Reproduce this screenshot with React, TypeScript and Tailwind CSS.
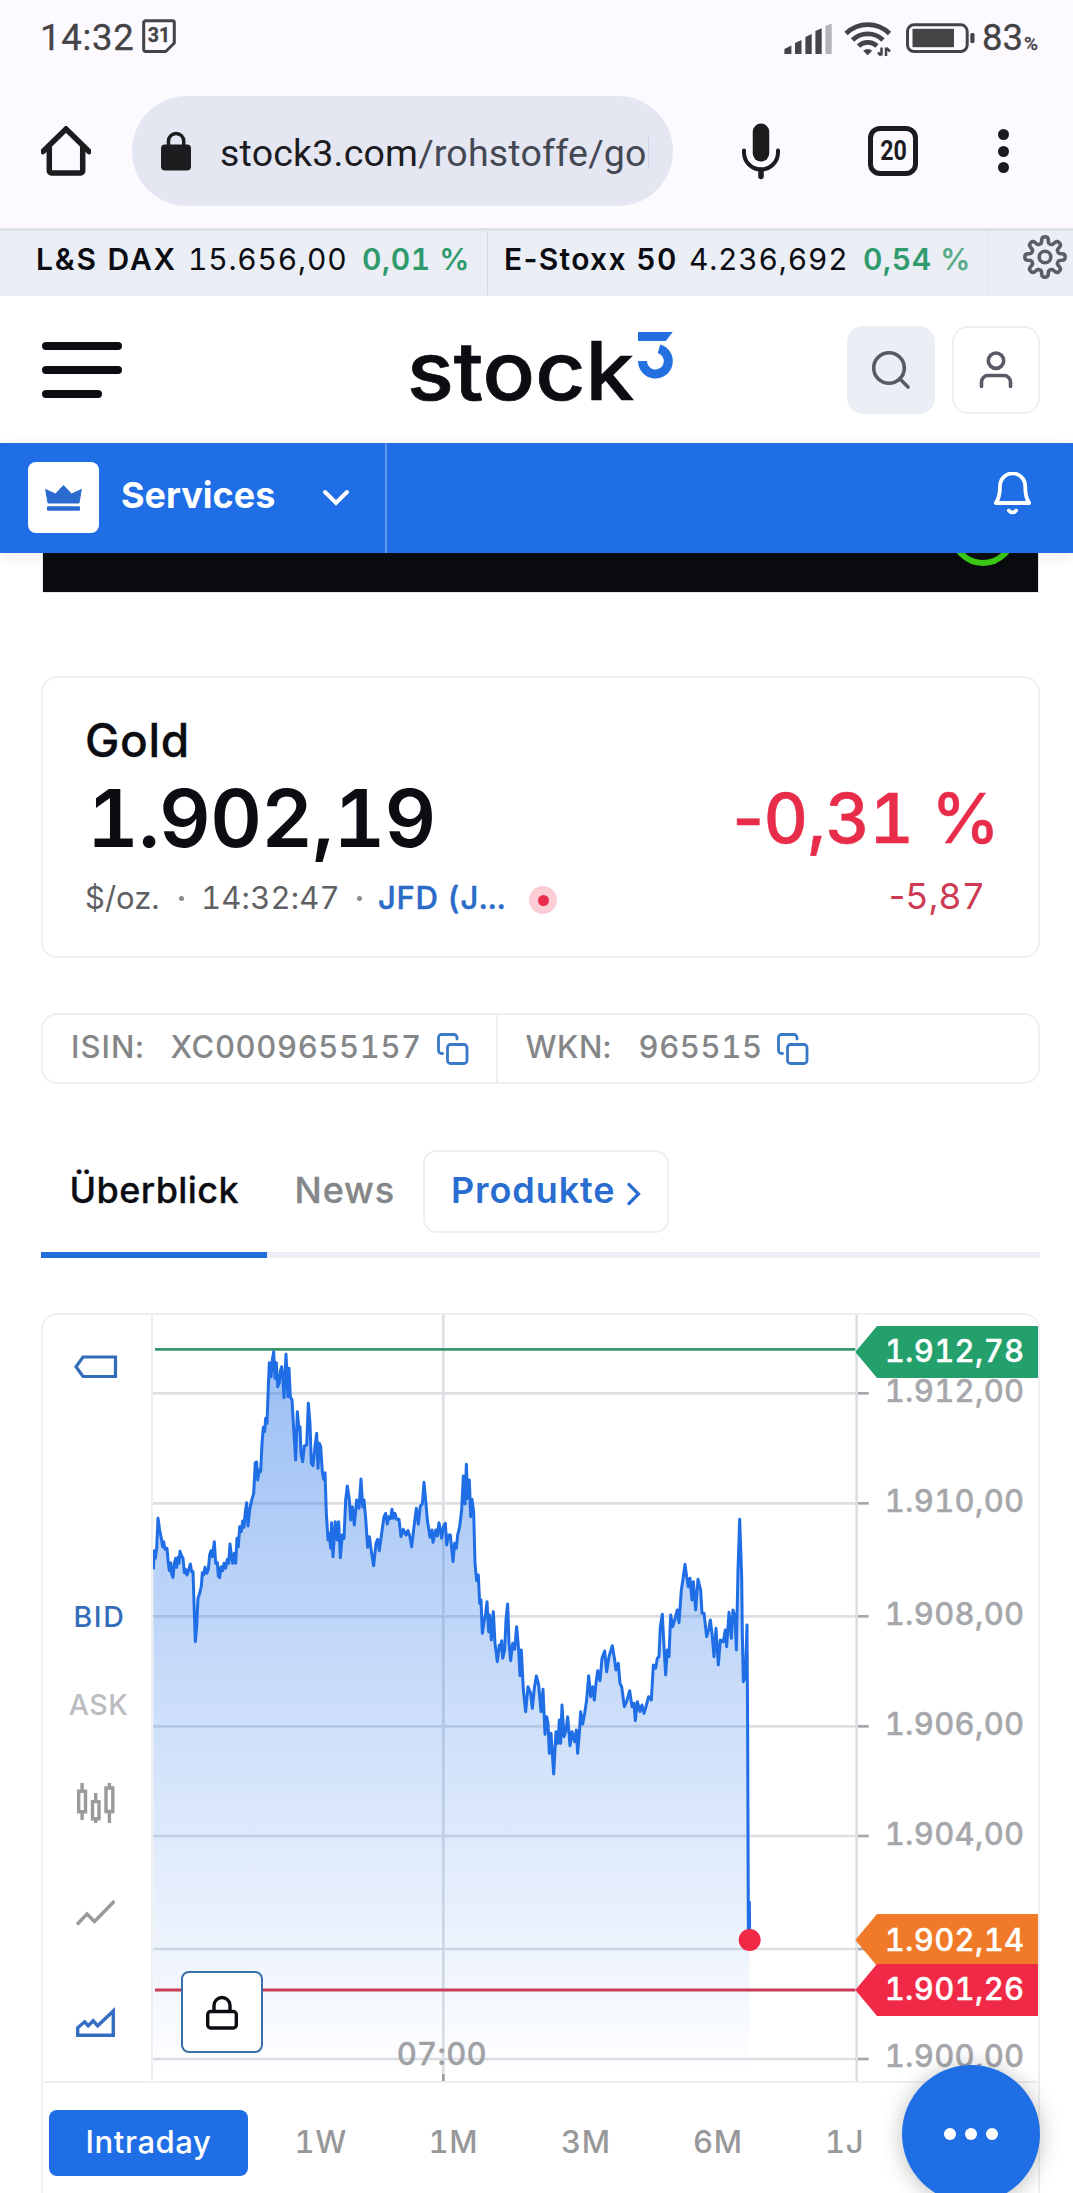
import type { ReactNode } from "react";

/* Chart coordinates are thirds of a pixel inside the price panel's own view box. */
const SERIES_EARLY: number[] = [
  460, 808, 463, 752, 466, 775, 470, 745, 474, 655, 479, 690, 484, 715, 488, 740, 491, 725, 495, 748, 501, 745, 505, 790,
  508, 812, 512, 788, 515, 822, 519, 832, 523, 790, 527, 775, 530, 802, 534, 772, 537, 790, 540, 754, 545, 768, 549, 775,
  553, 818, 557, 808, 561, 825, 566, 810, 571, 792, 575, 815, 579, 815, 583, 940, 586, 1025, 590, 980, 594, 895, 599, 880,
  604, 858, 607, 818, 611, 825, 615, 802, 620, 820, 625, 808, 629, 765, 633, 752, 637, 770, 643, 725, 647, 790, 652, 788,
  655, 828, 659, 833, 663, 800, 668, 812, 672, 790, 677, 805, 682, 778, 686, 790, 690, 732, 694, 765, 698, 790, 703, 760,
  707, 790, 711, 715, 715, 740, 719, 680, 724, 695, 728, 663, 732, 682, 736, 635, 740, 608, 744, 678, 749, 630, 754, 605,
  761, 580, 766, 488, 770, 486, 773, 540, 778, 510, 782, 515, 786, 430, 790, 382, 794, 395, 797, 355, 801, 370, 805, 260,
  808, 188, 813, 230, 817, 180, 821, 155, 825, 235, 829, 188, 833, 260, 838, 248, 841, 215, 845, 200, 849, 240, 852, 293,
  858, 163, 864, 290, 867, 205, 871, 290, 876, 300, 880, 370, 887, 480, 892, 335, 897, 390, 900, 380, 903, 460, 908, 485,
  913, 438, 920, 435, 925, 310, 930, 370, 934, 490, 939, 497, 945, 440, 950, 400, 954, 505, 958, 430, 962, 440, 967, 515,
  971, 538, 975, 518, 979, 640, 984, 720, 988, 700, 992, 745, 995, 668, 999, 770, 1006, 665, 1012, 720, 1016, 665,
  1021, 773, 1027, 705, 1032, 715, 1037, 600, 1042, 558, 1048, 600, 1052, 660, 1057, 620, 1063, 675, 1070, 600,
  1077, 625, 1083, 537, 1088, 620, 1092, 600, 1097, 655, 1103, 742, 1108, 710, 1115, 760, 1121, 797, 1128, 730,
  1133, 718, 1138, 752, 1145, 700, 1152, 650, 1157, 640, 1162, 672, 1167, 650, 1172, 655, 1176, 628, 1180, 655,
  1185, 640, 1190, 658,
];

const SERIES_LATE: number[] = [
  57, 658, 63, 710, 70, 688, 78, 705, 84, 692, 90, 712, 95, 740, 102, 680, 109, 625, 115, 672, 121, 618, 127, 612,
  132, 547, 137, 600, 142, 660, 150, 712, 156, 690, 159, 727, 167, 690, 172, 708, 177, 668, 185, 715, 190, 680,
  196, 670, 200, 735, 205, 705, 211, 705, 219, 785, 224, 730, 229, 745, 233, 705, 239, 680, 245, 630, 250, 528,
  255, 612, 259, 493, 263, 595, 268, 540, 272, 650, 276, 598, 281, 635, 285, 790, 290, 842, 295, 825, 299, 910,
  303, 900, 307, 1000, 313, 960, 317, 940, 321, 905, 326, 995, 329, 945, 334, 1020, 340, 935, 345, 1030, 352, 1085,
  358, 1035, 362, 1050, 365, 1022, 368, 1075, 374, 1050, 378, 960, 383, 912, 387, 1030, 392, 1082, 398, 1030,
  404, 1048, 410, 980, 416, 1050, 420, 1127, 424, 1050, 430, 1170, 437, 1235, 444, 1160, 452, 1180, 457, 1225,
  463, 1165, 469, 1128, 476, 1155, 483, 1235, 489, 1168, 495, 1303, 500, 1250, 504, 1270, 508, 1360, 513, 1300,
  521, 1422, 528, 1295, 534, 1330, 538, 1260, 542, 1330, 546, 1215, 552, 1310, 558, 1290, 563, 1250, 570, 1337,
  576, 1295, 584, 1325, 589, 1290, 593, 1360, 598, 1300, 602, 1235, 608, 1272, 614, 1240, 620, 1200, 626, 1127,
  632, 1190, 638, 1160, 643, 1200, 648, 1150, 653, 1112, 660, 1142, 666, 1075, 674, 1053, 680, 1115, 687, 1070,
  697, 1037, 704, 1080, 708, 1110, 715, 1090, 720, 1150, 725, 1160, 733, 1220, 740, 1205, 749, 1172, 756, 1220,
  762, 1210, 766, 1262, 772, 1205, 780, 1235, 786, 1215, 792, 1240, 798, 1220, 806, 1190, 814, 1200, 820, 1095,
  827, 1105, 832, 1075, 837, 1070, 841, 980, 847, 943, 852, 1040, 857, 1125, 862, 1050, 867, 1070, 872, 945,
  878, 980, 884, 960, 892, 930, 897, 968, 904, 870, 910, 830, 915, 793, 920, 830, 925, 860, 930, 835, 936, 900,
  940, 845, 947, 930, 954, 838, 962, 870, 966, 940, 972, 940, 980, 1010, 987, 985, 991, 960, 996, 1000, 1002, 1070,
  1008, 985, 1015, 1095, 1021, 1020, 1030, 1025, 1036, 990, 1040, 1040, 1047, 937, 1054, 1015, 1059, 930, 1065, 950,
  1069, 1050, 1074, 810, 1079, 658, 1085, 830, 1087, 1000, 1090, 1145, 1096, 1130, 1101, 975, 1103, 1300, 1105, 1890,
  1108, 1806, 1109, 1900,
];

const toPoints = (flat: number[], dx: number) => {
  const out: string[] = [];
  for (let i = 0; i < flat.length; i += 2) out.push(`${flat[i] + dx},${flat[i + 1]}`);
  return out;
};
const LINE = [...toPoints(SERIES_EARLY, 0), ...toPoints(SERIES_LATE, 1140)].join(" ");

const AXIS = [
  { y: 280, label: "1.912,00", baseline: 306 },
  { y: 610, label: "1.910,00", baseline: 636 },
  { y: 949, label: "1.908,00", baseline: 975 },
  { y: 1279, label: "1.906,00", baseline: 1305 },
  { y: 1608, label: "1.904,00", baseline: 1635 },
  { y: 1947, label: "", baseline: 1973 },
  { y: 2277, label: "1.900,00", baseline: 2300 },
];

const TAGS = [
  { y: 156, label: "1.912,78", fill: "#24a06c", baseline: 186 },
  { y: 1920, label: "1.902,14", fill: "#f07a28", baseline: 1952 },
  { y: 2070, label: "1.901,26", fill: "#f02a46", baseline: 2099 },
];

function AxisText({ x, y, fill, children }: { x: number; y: number; fill: string; children: ReactNode }) {
  return (
    <text x={x} y={y} fontSize="93" fontWeight="500" letterSpacing="1" fill={fill} stroke={fill} strokeWidth="1">
      {children}
    </text>
  );
}

function PriceChart() {
  return (
    <svg viewBox="459 45 2655 2298" className="block h-[766px] w-[885px]">
      <defs>
        <linearGradient id="area" gradientUnits="userSpaceOnUse" x1="0" y1="155" x2="0" y2="2330">
          <stop offset="0" stopColor="#1f6ee6" stopOpacity="0.45" />
          <stop offset="1" stopColor="#1f6ee6" stopOpacity="0" />
        </linearGradient>
      </defs>
      {AXIS.map((a) => (
        <g key={a.y}>
          <line x1="459" x2="2570" y1={a.y} y2={a.y} stroke="#dcdfe4" strokeWidth="8" />
          <line x1="2574" x2="2606" y1={a.y} y2={a.y} stroke="#a6a7ab" strokeWidth="8" />
          <AxisText x={2654} y={a.baseline} fill="#a6a7ab">
            {a.label}
          </AxisText>
        </g>
      ))}
      <line x1="1330" x2="1330" y1="45" y2="2343" stroke="#dcdfe4" strokeWidth="8" />
      <line x1="1330" x2="1330" y1="2322" y2="2343" stroke="#9a9b9f" strokeWidth="8" />
      <line x1="2570" x2="2570" y1="45" y2="2343" stroke="#dcdfe4" strokeWidth="8" />
      <polygon points={`460,2343 ${LINE} 2248,2343`} fill="url(#area)" />
      <line x1="465" x2="2566" y1="148" y2="148" stroke="#36966c" strokeWidth="8.5" />
      <line x1="465" x2="2566" y1="2070" y2="2070" stroke="#c93c56" strokeWidth="8.5" />
      <polyline points={LINE} fill="none" stroke="#1f6ee6" strokeWidth="9" strokeLinejoin="round" />
      <circle cx="2249" cy="1920" r="33" fill="#f02a46" />
      <AxisText x={1190} y={2294} fill="#a0a1a5">
        07:00
      </AxisText>
      {TAGS.map((t) => (
        <g key={t.label}>
          <polygon
            points={`2566,${t.y} 2631,${t.y - 78} 3114,${t.y - 78} 3114,${t.y + 78} 2631,${t.y + 78}`}
            fill={t.fill}
          />
          <AxisText x={2654} y={t.baseline} fill="#ffffff">
            {t.label}
          </AxisText>
        </g>
      ))}
    </svg>
  );
}

function CopyIcon() {
  return (
    <svg viewBox="0 0 32 32" className="h-8 w-8" fill="none" stroke="#3a78c8" strokeWidth="2.8" strokeLinecap="round">
      <rect x="10.5" y="11.5" width="19.5" height="19" rx="3" />
      <path d="M5.500 20.500h-1a3 3 0 0 1-3-3V4.500a3 3 0 0 1 3-3h12.500a3 3 0 0 1 3 3v1.500" />
    </svg>
  );
}

function StatusBar() {
  return (
    <div className="flex h-[76px] items-center text-[#444346] font-[Roboto] [-webkit-text-stroke:0.3px]">
      <span className="ml-10 w-[102px] text-[36.5px] leading-none tracking-[0.7px]">14:32</span>
      <div className="relative mt-[-4px] flex h-[34px] w-[34px] items-center justify-center">
        <svg viewBox="0 0 34 34" className="absolute inset-0" fill="none" stroke="#444346" strokeWidth="3">
          <path d="M3.500 1.700h27a1.800 1.800 0 0 1 1.800 1.800V24l-8.500 8.500H3.500a1.800 1.800 0 0 1-1.800-1.800V3.500a1.800 1.800 0 0 1 1.800-1.800z" strokeLinejoin="round" />
        </svg>
        <span className="relative text-[19.500px] font-bold leading-none">31</span>
      </div>
      <svg viewBox="784 18 48 36" className="ml-[608px] h-9 w-12" fill="#444346">
        <path d="M784.4 47l7-3.500V52h-7z" />
        <path d="M795 41l6.500-3V52H795z" />
        <path d="M805.400 35l6.300-3V52h-6.300z" />
        <path d="M815.400 29l6.300-2.700V52h-6.300z" />
        <path d="M825.400 24l6.300-2.500V52h-6.300z" fill="#b5b3b8" />
      </svg>
      <svg viewBox="844 18 48 37" className="ml-3 h-[37px] w-12" fill="none" stroke="#444346" strokeWidth="4.700">
        <path d="M846 31.500a31 31 0 0 1 43.500 0" />
        <path d="M852.500 38a22 22 0 0 1 30.500 0" />
        <path d="M858.500 44a13.500 13.500 0 0 1 18.500 0" />
        <path d="M867.700 53.300l-4.500-4.500a6.500 6.500 0 0 1 9 0z" fill="#444346" stroke="none" />
        <path d="M881.500 45.500v8M878 50.500l3 3M886 54v-8.500M886.500 46l3.500 3.500" strokeWidth="2.500" />
      </svg>
      <svg viewBox="905 20 70 33" className="ml-[13px] h-[33px] w-[70px]" fill="none">
        <rect x="907.500" y="22.800" width="59.700" height="26.700" rx="6.500" stroke="#444346" strokeWidth="3" />
        <rect x="912.500" y="26.800" width="41.500" height="18.400" fill="#444346" />
        <rect x="970.300" y="31" width="4.200" height="10" rx="1.500" fill="#444346" />
      </svg>
      <span className="ml-[7px] text-[36.5px] leading-none">83</span>
      <span className="mt-[10px] ml-px text-[19px] font-medium leading-none">%</span>
    </div>
  );
}

function BrowserToolbar() {
  return (
    <div className="mt-5 flex h-[110px] items-center font-[Roboto]">
      <svg viewBox="41 126 50 50" className="ml-[41px] h-[50px] w-[50px]" fill="none" stroke="#1c1b1e" strokeWidth="5.500" strokeLinecap="round">
        <path d="M43 151.500L66 129l23 22.500" strokeLinejoin="miter" />
        <path d="M49.300 147v24a2 2 0 0 0 2 2h29.400a2 2 0 0 0 2-2v-24" strokeLinecap="butt" />
      </svg>
      <div className="ml-[41px] flex h-[110px] w-[541px] items-center rounded-full bg-[#e4e6f2]">
        <svg viewBox="161 130 30 40" className="ml-[29px] h-10 w-[30px]">
          <rect x="161" y="143.500" width="30" height="26" rx="4" fill="#1c1b1e" />
          <path d="M168.500 145v-5a7.600 7.600 0 0 1 15.200 0v5" fill="none" stroke="#1c1b1e" strokeWidth="3.500" />
        </svg>
        <span className="ml-[29px] mt-[3px] w-[429px] whitespace-nowrap border-r border-[#cfd2e2] text-[37.5px] leading-[32px] tracking-[0.2px] text-[#444852]">
          <span className="text-[#1c1b1e]">stock3.com</span>/rohstoffe/go
        </span>
      </div>
      <svg viewBox="741 123 40 57" className="ml-[68px] h-[57px] w-10" fill="none" stroke="#1c1b1e" strokeLinecap="round">
        <path d="M761 131.800v21.500" strokeWidth="16.500" />
        <path d="M744 150.500v2a17 17 0 0 0 34 0v-2" strokeWidth="4" />
        <path d="M761 170v6.500" strokeWidth="5.500" />
      </svg>
      <div className="ml-[87px] flex h-[50px] w-[50px] items-center justify-center rounded-[12px] border-[5.500px] border-[#1c1b1e] text-[27px] font-bold leading-none text-[#1c1b1e]">
        <span className="scale-x-[0.86]">20</span>
      </div>
      <div className="ml-[80px] flex flex-col gap-[5.500px]">
        <i className="h-[11px] w-[11px] rounded-full bg-[#1c1b1e]" />
        <i className="h-[11px] w-[11px] rounded-full bg-[#1c1b1e]" />
        <i className="h-[11px] w-[11px] rounded-full bg-[#1c1b1e]" />
      </div>
    </div>
  );
}

function Ticker() {
  const gear: string[] = [];
  for (let i = 0; i <= 160; i++) {
    const a = (i / 160) * Math.PI * 2;
    const r = 17 + 3.2 * Math.tanh(2.2 * Math.cos(8 * a));
    gear.push(`${(22 + r * Math.sin(a)).toFixed(2)},${(22 - r * Math.cos(a)).toFixed(2)}`);
  }
  return (
    <div className="flex h-[68px] items-center border-t-[3px] border-[#dfe1ea] bg-[#ebeef5] pb-[10px] text-[30px] leading-none text-[#0a0c12]">
      <span className="ml-9 w-[151px] whitespace-nowrap font-semibold tracking-[1.8px]">L&amp;S DAX</span>
      <span className="w-[175px] pl-px tracking-[0.8px]">15.656,00</span>
      <span className="w-[125px] whitespace-nowrap font-semibold tracking-[0.6px] text-[#2f9a6c]">0,01 %</span>
      <i className="-mb-[10px] h-[64px] w-px self-start bg-[#d4d7e2]" />
      <span className="ml-4 w-[185px] whitespace-nowrap font-semibold tracking-[1.3px]">
        E<span className="[font-feature-settings:normal]">-</span>Stoxx 50
      </span>
      <span className="w-[174px] tracking-[0.8px]">4.236,692</span>
      <span className="w-[124px] whitespace-nowrap font-semibold tracking-[0.6px] text-[#2f9a6c]">
        0,54 <span className="text-[#58ab87]">%</span>
      </span>
      <i className="-mb-[10px] h-[64px] w-px self-start bg-[#e3e6ee]" />
      <svg viewBox="0 0 44 44" className="-mt-[3px] ml-[35px] h-11 w-11" fill="none" stroke="#5b5e68" strokeWidth="3.600" strokeLinejoin="round">
        <polygon points={gear.join(" ")} />
        <circle cx="22" cy="22" r="5.800" />
      </svg>
    </div>
  );
}

function SiteHeader() {
  return (
    <div className="flex h-[147px] items-center bg-white pt-px">
      <div className="ml-[42px] flex flex-col gap-4">
        <i className="h-2 w-[80px] rounded-full bg-[#0b0d12]" />
        <i className="h-2 w-[80px] rounded-full bg-[#0b0d12]" />
        <i className="h-2 w-[60px] rounded-full bg-[#0b0d12]" />
      </div>
      <div className="ml-[285px] flex w-[270px]">
        <span className="-mt-[5px] w-[230px] origin-bottom scale-y-[0.93] text-[87px] font-medium leading-[90px] tracking-[0px] text-[#0b0d12] [-webkit-text-stroke:0.8px]">
          stock
        </span>
        <svg viewBox="636 331 37 49" className="mt-[3px] h-[49px] w-[37px]">
          <path d="M637 332h34.800l-7 9H637z" fill="#2470e0" />
          <path d="M641.500 361a12.900 12.900 0 1 0 16.500-12.300" fill="none" stroke="#2470e0" strokeWidth="9" />
        </svg>
      </div>
      <div className="ml-[170px] flex gap-[17px]">
        <div className="flex h-[88px] w-[88px] items-center justify-center rounded-[16px] bg-[#ebeef5]">
          <svg viewBox="0 0 40 40" className="h-10 w-10" fill="none" stroke="#585b65" strokeWidth="3.600" strokeLinecap="round">
            <circle cx="18" cy="18" r="15.300" />
            <path d="M29 29l8 8" />
          </svg>
        </div>
        <div className="flex h-[88px] w-[88px] items-center justify-center rounded-[16px] border-2 border-[#eeeff1]">
          <svg viewBox="0 0 36 40" className="h-10 w-9" fill="none" stroke="#585b65" strokeWidth="3.600" strokeLinecap="round">
            <circle cx="18" cy="10.700" r="7.700" />
            <path d="M3.500 36.500v-4.500a6.500 6.500 0 0 1 6.500-6.500h16a6.500 6.500 0 0 1 6.500 6.500v4.500" />
          </svg>
        </div>
      </div>
    </div>
  );
}

function ServicesBar() {
  return (
    <div className="relative z-10 flex h-[110px] items-center bg-[#1f6ee6] text-white shadow-[0_4px_14px_rgba(0,0,0,0.08)]">
      <div className="mb-px ml-7 flex h-[71px] w-[71px] items-center justify-center rounded-[8px] bg-white">
        <svg viewBox="0 0 37 26" className="h-[26px] w-[37px]" fill="#2a6bcf" stroke="#2a6bcf" strokeWidth="1" strokeLinejoin="round">
          <path d="M.7 4.500l9.800 4.500L18.500.6 26.500 9l9.800-4.500L34 18H3z" />
          <rect x="2.500" y="21.800" width="32" height="3.400" />
        </svg>
      </div>
      <span className="mb-[7px] ml-[22px] w-[202px] text-[36px] font-bold leading-none">Services</span>
      <svg viewBox="0 0 26 18" className="h-[18px] w-[26px]" fill="none" stroke="#fff" strokeWidth="4" strokeLinecap="round">
        <path d="M2 3l11 11L24 3" />
      </svg>
      <i className="ml-[36px] h-full w-[2px] bg-[#5e97ef]" />
      <svg viewBox="993 471 39 44" className="mb-[9px] ml-[606px] h-11 w-[39px]" fill="none" stroke="#fff" strokeWidth="3.800" strokeLinecap="round" strokeLinejoin="round">
        <path d="M995.800 502h33.400c-3-4-4-9-4-17a12.600 12.600 0 0 0-25.200 0c0 8-1.200 13-4.200 17z" />
        <path d="M1008.800 509.500a4.500 4.500 0 0 0 7.400 0" />
      </svg>
    </div>
  );
}

function QuoteCard() {
  return (
    <div className="mt-[83px] h-[282px] rounded-[16px] border-2 border-[#eeeff1] px-[43px]">
      <div className="-ml-px mt-[39px] h-[46px] text-[46px] font-medium leading-[46px] tracking-[0.7px] text-[#0b0d12] [-webkit-text-stroke:0.3px]">
        Gold
      </div>
      <div className="mt-[15px] flex h-[80px] items-center justify-between whitespace-nowrap leading-[80px]">
        <span className="ml-px text-[80px] font-semibold tracking-[-0.600px] text-[#0b0d12]">1.902,19</span>
        <span className="-mr-[4px] text-[69px] font-medium tracking-[-0.700px] text-[#e72d49] [-webkit-text-stroke:0.4px]">
          <span className="[font-feature-settings:normal]">-</span>0,31 %
        </span>
      </div>
      <div className="mt-[22px] flex h-[36px] items-center whitespace-nowrap text-[31px] leading-[36px] text-[#5f6062]">
        <span className="-ml-px w-[94px]">$/oz.</span>
        <i className="h-[5px] w-[5px] rounded-full bg-[#8a8b8e]" />
        <span className="ml-[17px] w-[156px] tracking-[0.200px]">14:32:47</span>
        <i className="h-[5px] w-[5px] rounded-full bg-[#8a8b8e]" />
        <span className="ml-[16px] w-[151px] font-medium tracking-[0.700px] text-[#2a6bc8] [-webkit-text-stroke:0.5px]">JFD (J...</span>
        <span className="mt-1 flex h-7 w-7 items-center justify-center rounded-full bg-[#fbcdd4]">
          <i className="h-[11px] w-[11px] rounded-full bg-[#e72d49]" />
        </span>
        <span className="mb-[5px] ml-auto mr-[10px] text-[36px] text-[#cc3a53]">
          <span className="[font-feature-settings:normal]">-</span>5,87
        </span>
      </div>
    </div>
  );
}

function IdRow() {
  return (
    <div className="mt-[55px] flex h-[71px] items-center whitespace-nowrap rounded-[16px] border-2 border-[#eeeff1] text-[31px] font-medium leading-none text-[#858688]">
      <span className="mb-1 ml-[28px] w-[99.500px] tracking-[1px]">ISIN:</span>
      <span className="mb-1 w-[266px] tracking-[0.6px]">XC0009655157</span>
      <CopyIcon />
      <i className="ml-[27px] h-full w-[2px] bg-[#eeeff1]" />
      <span className="mb-1 ml-[28px] w-[113px] tracking-[0.5px]">WKN:</span>
      <span className="mb-1 w-[138.500px] tracking-[0.6px]">965515</span>
      <CopyIcon />
    </div>
  );
}

function Tabs() {
  return (
    <div className="mt-[66px] h-[108px]">
      <div className="flex h-[83px] items-center text-[36px] font-medium leading-none [-webkit-text-stroke:0.3px]">
        <span className="mb-[3px] ml-[28.500px] w-[225px] tracking-[0.4px] text-[#0b0d12]">Überblick</span>
        <span className="mb-[3px] w-[128px] tracking-[0.9px] text-[#858688]">News</span>
        <div className="flex h-[83px] w-[246px] items-center rounded-[14px] border-2 border-[#eeeff1] font-semibold tracking-[0.9px] text-[#2a6dd0] [-webkit-text-stroke:0px]">
          <span className="mb-[3px] ml-[26.500px] w-[176px]">Produkte</span>
          <svg viewBox="0 0 14 24" className="mt-1 h-6 w-[14px]" fill="none" stroke="#2a6dd0" strokeWidth="3.200" strokeLinecap="round">
            <path d="M2 2.500l9.500 9.500L2 21.500" />
          </svg>
        </div>
      </div>
      <div className="mt-[19px] h-[6px] bg-[#ebeef5]">
        <div className="h-full w-[226px] bg-[#236ddb]" />
      </div>
    </div>
  );
}

function ChartTools() {
  return (
    <div className="flex w-[110px] flex-col items-center border-r-2 border-[#eeeff1] font-medium leading-none">
      <svg viewBox="0 0 44 24" className="-ml-[3px] mt-[40px] h-6 w-11" fill="none" stroke="#336dba" strokeWidth="3.200">
        <path d="M9 2h32.500v19.500H9L2 11.750z" />
      </svg>
      <span className="ml-[5px] mt-[224px] h-7 text-[28.500px] leading-7 tracking-[1.700px] text-[#336dba]">BID</span>
      <span className="ml-[3px] mt-[60px] h-7 text-[28.500px] leading-7 tracking-[0.5px] text-[#bbbcbf]">ASK</span>
      <svg viewBox="0 0 38 40" className="-ml-[3px] mt-[64px] h-10 w-[38px]" fill="none" stroke="#999a9c" strokeWidth="3.400">
        <path d="M1.700 8.300h6.800v20.400H1.700zM5.100 0v8M5.100 29v8M15.500 18.600h6.500v17.200h-6.500zM18.700 10v8M18.700 36v4M29 5h6.800v23.500H29zM32.400 0v5M32.400 28.500V40" />
      </svg>
      <svg viewBox="0 0 39 26" className="-ml-[3px] mt-[77px] h-[26px] w-[39px]" fill="none" stroke="#999a9c" strokeWidth="3.400">
        <path d="M1 24.500L11 14l7.500 7.500L38.500 1" />
      </svg>
      <svg viewBox="0 0 39 32" className="-ml-[3px] mt-[80px] h-8 w-[39px]" fill="none" stroke="#336dc4" strokeWidth="3.400">
        <path d="M1.700 29.300v-7.500l7-6 3.500 4 5-5 4.500 5L37.300 5v24.300z" />
      </svg>
    </div>
  );
}

function Range({ children, className }: { children: ReactNode; className: string }) {
  return <span className={`flex-none ${className}`}>{children}</span>;
}

function ChartCard() {
  return (
    <div className="relative mt-[55px] h-[900px] w-[999px] rounded-t-[16px] border-2 border-[#eeeff1]">
      <div className="flex h-[768px] border-b-2 border-[#eeeff1]">
        <ChartTools />
        <PriceChart />
      </div>
      <div className="absolute left-[138px] top-[656px] flex h-[82px] w-[82px] items-center justify-center rounded-[8px] border-2 border-[#3a70a8] bg-white">
        <svg viewBox="206 993 32 36" className="h-9 w-8" fill="none" stroke="#0b0d12" strokeWidth="3.400">
          <rect x="207.700" y="1010.500" width="28.600" height="16.500" rx="3" />
          <path d="M214 1010v-5.500a8 8 0 0 1 16 0v5.500" />
        </svg>
      </div>
      <div className="flex pt-[27px] text-[31px] font-medium leading-[64px] tracking-[0.6px] text-[#97989a]">
        <Range className="ml-[6px] h-[66px] w-[199px] rounded-[8px] bg-[#1f6ee6] text-center text-white">Intraday</Range>
        <Range className="ml-[46.500px] w-[134px]">1W</Range>
        <Range className="w-[132.500px]">1M</Range>
        <Range className="w-[132px]">3M</Range>
        <Range className="w-[132px]">6M</Range>
        <Range className="w-[60px]">1J</Range>
      </div>
      <div className="absolute left-[859px] top-[750px] flex h-[138px] w-[138px] items-center justify-center gap-[9px] rounded-full bg-[#1f6ee6] shadow-[0_2px_22px_rgba(0,0,0,0.26)]">
        <i className="h-3 w-3 rounded-full bg-white" />
        <i className="h-3 w-3 rounded-full bg-white" />
        <i className="h-3 w-3 rounded-full bg-white" />
      </div>
    </div>
  );
}

export default function App() {
  return (
    <div className="h-[2193px] w-[1073px] overflow-hidden bg-white font-[Inter,sans-serif] [font-feature-settings:'tnum']">
      <div className="h-[228px] bg-[#fcfaff]">
        <StatusBar />
        <BrowserToolbar />
      </div>
      <Ticker />
      <SiteHeader />
      <ServicesBar />
      <div className="ml-[41px] w-[999px]">
        <div className="ml-px h-[40px] w-[997px] overflow-hidden border-x border-b border-[#e6e8ef] bg-[#0a0c10]">
          <div className="-mt-[53px] ml-[907px] h-[66px] w-[66px] rounded-full border-[6px] border-[#3ccb16]" />
        </div>
        <QuoteCard />
        <IdRow />
        <Tabs />
        <ChartCard />
      </div>
    </div>
  );
}
